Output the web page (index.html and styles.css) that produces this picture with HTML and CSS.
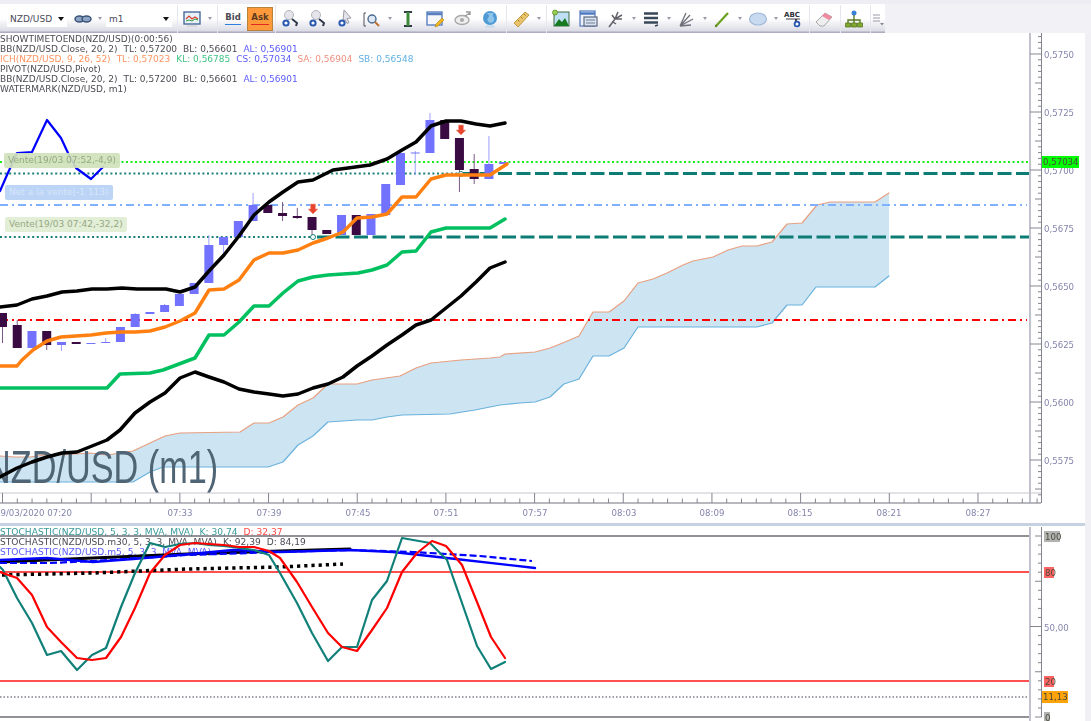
FILE: index.html
```html
<!DOCTYPE html>
<html lang="en">
<head>
    <meta charset="UTF-8">
    <title>NZD/USD m1</title>
    <link rel="stylesheet" href="styles.css">
</head>
<body>
<svg class="defs" width="0" height="0">
    <symbol id="i-glass" viewBox="0 0 20 20">
        <circle cx="9" cy="6" r="4.5" fill="#e4e4ea" stroke="#b4b4c0"/>
        <path d="M12 10l5 4-1 3" fill="none" stroke="#30384a" stroke-width="2"/>
        <circle cx="6" cy="14" r="2.6" fill="#fff" stroke="#2858b0" stroke-width="2"/>
    </symbol>
</svg>
<div class="page">
    <div class="top-strip"></div>
    <div class="toolbar-row">
        <div class="toolbar">
            <div class="tb-select first"><span>NZD/USD</span><i class="caret"></i></div>
            <div class="tb-btn chain"><svg viewBox="0 0 20 20"><ellipse cx="6.5" cy="10" rx="4.5" ry="3" fill="#8ea4c4" stroke="#3c5478" stroke-width="1.5"/><ellipse cx="13.5" cy="10" rx="4.5" ry="3" fill="#8ea4c4" stroke="#3c5478" stroke-width="1.5"/></svg></div>
            <i class="tb-arrow"></i>
            <div class="tb-select second"><span>m1</span><i class="caret"></i></div>
            <i class="tb-sep after-select"></i>
            <div class="tb-btn"><svg viewBox="0 0 20 20"><rect x="2" y="3" width="16" height="12" fill="#e8f0fa" stroke="#4a6a9c" stroke-width="1.4"/><path d="M4 10l3-3 3 3 3-2 3 2" fill="none" stroke="#d84030" stroke-width="1.2"/><path d="M4 12l3-1 3 1 3-2 3 1" fill="none" stroke="#30a040"/><path d="M5 17h10" stroke="#c4c4cc"/></svg></div>
            <i class="tb-arrow"></i>
            <i class="tb-sep wide"></i>
            <div class="tb-side bid"><span>Bid</span></div>
            <div class="tb-side ask"><span>Ask</span></div>
            <i class="tb-sep"></i>
            <div class="tb-btn"><svg viewBox="0 0 20 20"><use href="#i-glass"/></svg></div>
            <div class="tb-btn"><svg viewBox="0 0 20 20"><use href="#i-glass"/></svg></div>
            <div class="tb-btn"><svg viewBox="0 0 20 20"><path d="M9 1l7 8-4 .5 2 4-2 1-2-4-2 2z" fill="#e4e4ea" stroke="#9c9ca8"/><circle cx="7" cy="14" r="2.6" fill="#fff" stroke="#2858b0" stroke-width="2"/></svg></div>
            <div class="tb-btn"><svg viewBox="0 0 20 20"><path d="M4 4H2v13h2" fill="none" stroke="#50505c"/><circle cx="10" cy="10" r="4" fill="#dce8f4" stroke="#4a6a8c" stroke-width="1.4"/><path d="M13 13l4 4" stroke="#c07030" stroke-width="2"/></svg></div>
            <i class="tb-arrow"></i>
            <div class="tb-btn"><svg viewBox="0 0 20 20"><path d="M6 3h8M6 17h8" stroke="#303840" stroke-width="2"/><path d="M10 3v14" stroke="#3a8a3a" stroke-width="3"/></svg></div>
            <div class="tb-btn"><svg viewBox="0 0 20 20"><rect x="2" y="3" width="15" height="13" fill="#f4f6fa" stroke="#5a80c0" stroke-width="1.4"/><path d="M2 5h15" stroke="#5a80c0" stroke-width="2.5"/><path d="M11 15l6-6 2 2-6 6-3 1z" fill="#f0b820" stroke="#b08010" stroke-width=".6"/></svg></div>
            <div class="tb-btn"><svg viewBox="0 0 20 20"><ellipse cx="9" cy="11" rx="7" ry="4.5" fill="#eee" stroke="#a8a8a8" stroke-width="1.4"/><circle cx="9" cy="11" r="2" fill="#aaa"/><path d="M12 7l5-3M13 3h4v3" fill="none" stroke="#999" stroke-width="1.4"/></svg></div>
            <div class="tb-btn"><svg viewBox="0 0 20 20"><circle cx="10" cy="9" r="7" fill="#4e9ad4"/><path d="M6 4c3 1 4 3 2 5s1 5 3 5 4-3 3-5-2-3 0-5" fill="#8cc4ea"/><ellipse cx="10" cy="17.5" rx="5" ry="1.2" fill="#c8dcec"/></svg></div>
            <i class="tb-sep"></i>
            <div class="tb-btn"><svg viewBox="0 0 20 20"><path d="M3 14L14 3l4 3L7 18z" fill="#eac46a" stroke="#c09a40"/><path d="M7 11l1.500 1.500M10 8l1.500 1.500M13 5l1.500 1.500" stroke="#a07a28"/></svg></div>
            <i class="tb-arrow"></i>
            <i class="tb-sep wide"></i>
            <div class="tb-btn"><svg viewBox="0 0 20 20"><rect x="3" y="3" width="15" height="14" fill="#bfe0f4" stroke="#3c6a40"/><path d="M3 17l5-7 3 3 3-4 4 8z" fill="#187a20"/><circle cx="4" cy="3.500" r="2.500" fill="#98d050" stroke="#508020" stroke-width=".7"/></svg></div>
            <div class="tb-btn"><svg viewBox="0 0 20 20"><rect x="2" y="2" width="15" height="15" fill="#eef2fa" stroke="#5a80c0" stroke-width="1.3"/><path d="M2 4.500h15" stroke="#4a78c0" stroke-width="2.400"/><rect x="6" y="8" width="13" height="9" fill="#d8e2f0" stroke="#606c80" stroke-width="1.200"/><path d="M8 11h9M8 14h9" stroke="#707c90"/></svg></div>
            <div class="tb-btn"><svg viewBox="0 0 20 20"><path d="M3 18l6-8M9 10l-3-4M9 10l3-7M9 10l7-4M7 13l3 2M10 10l6 0" fill="none" stroke="#606068" stroke-width="1.500"/></svg></div>
            <i class="tb-arrow"></i>
            <div class="tb-btn"><svg viewBox="0 0 20 20"><path d="M3 4.500h14M3 9h14M3 13.500h14" stroke="#384858" stroke-width="2.400"/><path d="M14 17l3-1" stroke="#384858" stroke-width="1.500"/></svg></div>
            <i class="tb-arrow"></i>
            <div class="tb-btn"><svg viewBox="0 0 20 20"><path d="M3 17L9 4M3 17L13 6M3 17L16 10M3 17l11-1" fill="none" stroke="#70707a" stroke-width="1.300"/></svg></div>
            <i class="tb-arrow"></i>
            <div class="tb-btn"><svg viewBox="0 0 20 20"><path d="M4 17L16 4" stroke="#6aa020" stroke-width="2.200"/><circle cx="4" cy="17" r="1.200" fill="#608a20"/></svg></div>
            <i class="tb-arrow"></i>
            <div class="tb-btn"><svg viewBox="0 0 20 20"><ellipse cx="10" cy="10" rx="8.500" ry="6" fill="#c8daf0" stroke="#a0b8d8" stroke-width="1.200"/></svg></div>
            <i class="tb-arrow"></i>
            <div class="tb-btn"><svg viewBox="0 0 20 20"><text class="abc" x="1" y="8">ABC</text><path d="M3 10h14" stroke="#404048"/><path d="M13 10v3" stroke="#404048" stroke-width="2"/><circle cx="14" cy="15" r="2.400" fill="#fff" stroke="#2858b0" stroke-width="1.800"/></svg></div>
            <i class="tb-sep"></i>
            <div class="tb-btn"><svg viewBox="0 0 20 20"><path d="M2 13l9-9 7 4-8 9H6z" fill="#eee" stroke="#a8a8a8"/><path d="M11 4l7 4-3 3-7-4z" fill="#f08aa0"/></svg></div>
            <i class="tb-sep"></i>
            <div class="tb-btn"><svg viewBox="0 0 20 20"><circle cx="10" cy="4" r="2.500" fill="#3a80d8"/><path d="M10 6v4M4 14v-3h12v3M10 10v4" fill="none" stroke="#587a20" stroke-width="1.400"/><path d="M1.500 14h5v4h-5zM7.500 14h5v4h-5zM13.500 14h5v4h-5z" fill="#80a830" stroke="#587a20" stroke-width=".8"/></svg></div>
            <i class="tb-sep"></i>
            <div class="tb-more"><svg viewBox="0 0 12 14"><path d="M1 2h7M1 5h7M1 8h7" stroke="#9a9aa6"/><path d="M8 10h4l-2 2.500z" fill="#888894"/></svg></div>
        </div>
    </div>
    <div class="workspace">
        <div class="charts">
            <section class="pane price-pane">
                <svg id="price-chart" class="chart" viewBox="0 33 1085 490" width="1085" height="490"></svg>
                <div class="legend">
                    <div>SHOWTIMETOEND(NZD/USD)(0:00:56)</div>
                    <div>BB(NZD/USD.Close, 20, 2)<span class="gap">TL: 0,57200</span><span class="gap">BL: 0,56601</span><span class="gap c-blue">AL: 0,56901</span></div>
                    <div class="c-orange">ICH(NZD/USD, 9, 26, 52)<span class="gap">TL: 0,57023</span><span class="gap c-green">KL: 0,56785</span><span class="gap c-blue">CS: 0,57034</span><span class="gap c-salmon">SA: 0,56904</span><span class="gap c-sky">SB: 0,56548</span></div>
                    <div>PIVOT(NZD/USD,Pivot)</div>
                    <div>BB(NZD/USD.Close, 20, 2)<span class="gap">TL: 0,57200</span><span class="gap">BL: 0,56601</span><span class="gap c-blue">AL: 0,56901</span></div>
                    <div>WATERMARK(NZD/USD, m1)</div>
                </div>
                <div class="order-tag sell sell-top">Vente(19/03 07:52,-4,9)</div>
                <div class="order-tag net">Net a la vente(-1 113)</div>
                <div class="order-tag sell sell-low">Vente(19/03 07:42,-32,2)</div>
            </section>
            <div class="pane-divider"></div>
            <section class="pane stoch-pane">
                <svg id="stoch-chart" class="chart" viewBox="0 526 1085 195" width="1085" height="195"></svg>
                <div class="legend stoch-legend">
                    <div class="c-teal">STOCHASTIC(NZD/USD, 5, 3, 3, MVA, MVA)<span class="gap">K: 30,74</span><span class="gap c-red">D: 32,37</span></div>
                    <div>STOCHASTIC(NZD/USD.m30, 5, 3, 3, MVA, MVA)<span class="gap">K: 92,39</span><span class="gap">D: 84,19</span></div>
                    <div class="c-blue">STOCHASTIC(NZD/USD.m5, 5, 3, 3, MVA, MVA)</div>
                </div>
            </section>
        </div>
        <div class="gutter"></div>
    </div>
</div>
<script src="chart.js"></script>
</body>
</html>
```

FILE: styles.css
```css
html, body {
    margin: 0;
    padding: 0;
    background: #fff;
    overflow: hidden;
}
.defs {
    position: absolute;
}
.page {
    width: 1091px;
    height: 721px;
    display: flex;
    flex-direction: column;
    font-family: "DejaVu Sans", sans-serif;
    filter: blur(0.45px);
}
.top-strip {
    height: 4px;
    background: #eeedf4;
}
.toolbar-row {
    height: 29px;
    background: #f1f1f6;
    display: flex;
}
.toolbar {
    width: 878px;
    padding-left: 7px;
    display: flex;
    align-items: center;
    background: linear-gradient(#fff 0, #fff 50%, #dcdce6 92%, #aeaec2 97%);
}
.tb-btn {
    width: 27.5px;
    height: 22px;
    display: flex;
    align-items: center;
    justify-content: center;
    flex: none;
}
.tb-btn svg {
    width: 20px;
    height: 20px;
}
.tb-btn.chain {
    width: 26px;
    margin-left: 3px;
}
.tb-arrow {
    width: 8px;
    height: 3px;
    flex: none;
    position: relative;
}
.tb-arrow::after {
    content: "";
    position: absolute;
    left: 2px;
    top: 0;
    border: 2.5px solid transparent;
    border-top: 3px solid #9a9aa8;
    border-bottom: 0;
}
.tb-sep {
    width: 3px;
    height: 28px;
    flex: none;
    box-sizing: border-box;
    border-right: 1px solid #e6e6ee;
}
.tb-sep.wide {
    width: 4.5px;
}
.tb-sep.after-select {
    margin-left: 3px;
}
.tb-select {
    height: 17px;
    background: #fff;
    display: flex;
    align-items: center;
    justify-content: space-between;
    box-sizing: border-box;
    padding: 0 2px 0 3px;
    font-size: 9px;
    color: #4a4a5a;
    flex: none;
}
.tb-select.first {
    width: 60px;
}
.tb-select.second {
    width: 66px;
    margin-left: 2px;
}
.caret {
    width: 0;
    height: 0;
    border: 3.5px solid transparent;
    border-top: 4px solid #111;
    border-bottom: 0;
    margin-right: 1px;
}
.tb-side {
    width: 26px;
    height: 24px;
    box-sizing: border-box;
    flex: none;
    display: flex;
    align-items: center;
    justify-content: center;
    font-size: 8.5px;
    font-weight: bold;
}
.tb-side span {
    padding-bottom: 2px;
    border-bottom: 1px solid;
}
.bid {
    margin-left: 2px;
    color: #4a4a55;
}
.bid span {
    border-color: #2a80e0;
}
.ask {
    margin-left: 1px;
    color: #5a3a20;
    background: #ff9a3c;
    border: 1px solid #b8843c;
}
.ask span {
    border-color: #e02a20;
}
.tb-more {
    width: 12px;
    height: 14px;
    flex: none;
    margin-left: 1px;
}
.abc {
    font-size: 7px;
    font-weight: bold;
    fill: #303038;
}
.workspace {
    flex: 1;
    display: flex;
    min-height: 0;
}
.charts {
    width: 1085px;
    display: flex;
    flex-direction: column;
}
.gutter {
    flex: 1;
    background: #f0f0f5;
}
.pane {
    position: relative;
}
.price-pane {
    height: 490px;
}
.stoch-pane {
    height: 195px;
}
.chart {
    display: block;
    position: relative;
    z-index: 1;
}
.pane-divider {
    height: 3px;
    background: #c6d2e2;
}
.legend {
    position: absolute;
    left: 0;
    top: 1px;
    font-size: 9px;
    line-height: 10px;
    color: #4c4c54;
    white-space: nowrap;
}
.stoch-legend {
    top: 1px;
    font-size: 9.1px;
}
.gap {
    margin-left: 6px;
}
.c-blue { color: #5c5cff; }
.c-orange { color: #ff9460; }
.c-green { color: #40c484; }
.c-salmon { color: #f09080; }
.c-sky { color: #60b0e0; }
.c-teal { color: #3a9a9a; }
.c-red { color: #ff4a4a; }
.order-tag {
    position: absolute;
    z-index: 2;
    height: 15px;
    line-height: 15px;
    padding: 0 4px 0 4px;
    font-size: 9px;
    white-space: nowrap;
    border-radius: 2px;
}
.sell {
    color: #96a884;
}
.sell-top {
    left: 4px;
    top: 120px;
    background: rgba(208, 226, 188, 0.92);
}
.sell-low {
    left: 5px;
    top: 184px;
    background: #e2eed6;
}
.net {
    left: 5px;
    top: 152px;
    color: #d6e6fa;
    background: #bcd4f6;
}

/* chart drawing */
.ax-line { stroke: #c2c2ce; stroke-width: 2; }
.ruler { stroke: #858590; stroke-width: 1; fill: none; }
.time-line { stroke: #c6c6ce; stroke-width: 1; }
.time-base { stroke: #a0a0aa; stroke-width: 1.5; }
.ax-text { font-size: 8.6px; fill: #8484ae; }
.ax-badge-text { font-size: 8.6px; fill: #4a4a3a; }
.badge-gray { fill: #b2b2b2; }
.badge-red { fill: #ff6464; }
.badge-orange { fill: #ffa30a; }
.badge-lime { fill: #00ff00; }
.cloud { fill: #cde4f2; stroke: none; }
.cloud-top { fill: none; stroke: #e8a080; stroke-width: 1.2; }
.cloud-bot { fill: none; stroke: #6ab2dc; stroke-width: 1.2; }
.watermark { font-family: "Liberation Sans", sans-serif; font-size: 46px; fill: #4f6474; }
.hl-lime { stroke: #14f014; stroke-width: 2.2; stroke-dasharray: 2 2.5; }
.hl-teal-dot { stroke: #1a8078; stroke-width: 2.2; stroke-dasharray: 2 2.6; }
.hl-teal-dash { stroke: #0c7c74; stroke-width: 3; stroke-dasharray: 14 4.500; }
.hl-sky { stroke: #80b0ff; stroke-width: 1.8; stroke-dasharray: 8 4 2 4; }
.hl-red { stroke: #ff0000; stroke-width: 2.2; stroke-dasharray: 8 4 2 4; }
.up { fill: #7272ff; }
.up-wick { stroke: #a0a0ff; stroke-width: 1; }
.down { fill: #3a0a42; }
.down-wick { stroke: #7a5a84; stroke-width: 1; }
.mark-ring { fill: #fff; stroke: #1a8078; stroke-width: 1; }
.mark-arrow { fill: #e8452e; stroke: #f0a090; stroke-width: 0.6; }
.ln { fill: none; stroke-linejoin: round; stroke-linecap: round; }
.ln-black { stroke: #000; stroke-width: 3.500; }
.ln-orange { stroke: #ff8010; stroke-width: 3.500; }
.ln-green { stroke: #00c060; stroke-width: 3.500; }
.ln-blue { stroke: #0000ff; stroke-width: 2.200; }
.hl-pane { stroke: #6c6c74; stroke-width: 1.500; }
.hl-level { stroke: #ff5050; stroke-width: 2; }
.hl-dots { stroke: #80808a; stroke-width: 1.500; stroke-dasharray: 1.500 2; }
.st-teal { stroke: #108078; stroke-width: 2.200; }
.st-red { stroke: #ff0000; stroke-width: 2.200; }
.st-black { stroke: #000; stroke-width: 3; }
.st-blue { stroke: #0000ff; stroke-width: 2.400; }
.st-blue-dash { stroke: #0000ff; stroke-width: 2.200; stroke-dasharray: 7 3; stroke-linecap: butt; }
.st-black-dot { stroke: #000; stroke-width: 3.500; stroke-dasharray: 3.200 4; stroke-linecap: butt; }
```

FILE: chart.js
```js
// Draws both panes. All coordinates are page pixels, the viewBox of each svg lines up with the page.
const NS = 'http://www.w3.org/2000/svg';

function add(svg, tag, cls, attrs, text) {
    const el = document.createElementNS(NS, tag);
    if (cls) el.setAttribute('class', cls);
    for (const k in attrs) el.setAttribute(k, attrs[k]);
    if (text) el.textContent = text;
    svg.appendChild(el);
    return el;
}

function hline(svg, cls, y, x1, x2) {
    add(svg, 'line', cls, { x1: x1, y1: y, x2: x2, y2: y });
}

function vline(svg, cls, x, y1, y2) {
    add(svg, 'line', cls, { x1: x, y1: y1, x2: x, y2: y2 });
}

function poly(svg, cls, pts) {
    add(svg, 'polyline', 'ln ' + cls, { points: pts.join(' ') });
}

function axisText(svg, cls, x, y, text, anchor) {
    add(svg, 'text', cls, { x: x, y: y, 'text-anchor': anchor || 'start' }, text);
}

function badge(svg, cls, x, y, w, h, text) {
    add(svg, 'rect', cls, { x: x, y: y - h / 2, width: w, height: h });
    axisText(svg, 'ax-badge-text', x + 1, y + 3, text);
}

/* ---------- price pane ---------- */
const price = document.getElementById('price-chart');

const cloudTop = [[0,456],[15,457],[30,457],[45,455],[60,455],[90,453],[107,455],[133,451],[150,443],[165,436],[180,433],[240,432],[254,423],[269,423],[283,417],[298,405],[313,398],[328,384],[357,384],[372,380],[400,376],[416,368],[431,363],[461,360],[490,358],[500,357],[505,354],[535,352],[550,348],[565,342],[579,336],[593,312],[609,312],[624,301],[638,283],[653,279],[667,273],[683,265],[693,261],[713,257],[728,250],[742,246],[757,246],[772,242],[787,224],[802,223],[817,205],[830,202],[875,202],[889,193]];
const cloudBot = [[0,482],[133,482],[150,472],[163,467],[268,467],[283,462],[298,445],[313,436],[328,422],[357,420],[372,420],[387,417],[402,415],[450,414],[475,410],[500,405],[520,403],[535,402],[550,397],[564,384],[579,379],[593,356],[609,356],[624,348],[638,327],[757,327],[772,323],[787,305],[802,305],[816,287],[875,287],[889,276]];

add(price, 'polygon', 'cloud', { points: cloudTop.concat(cloudBot.slice().reverse()).join(' ') });
poly(price, 'cloud-top', cloudTop);
poly(price, 'cloud-bot', cloudBot);

add(price, 'text', 'watermark', { transform: 'translate(-14 483) scale(0.745 1)' }, 'NZD/USD (m1)');

hline(price, 'hl-red', 320, 0, 1027);
hline(price, 'hl-sky', 205, 0, 1027);
hline(price, 'hl-lime', 162, 0, 1029);
hline(price, 'hl-teal-dot', 173.5, 0, 461);
hline(price, 'hl-teal-dash', 173.5, 461, 1029);
hline(price, 'hl-teal-dot', 237, 0, 313);
hline(price, 'hl-teal-dash', 237, 317, 1029);

// [dir, bodyTop, bodyBottom, wickTop, wickBottom], one every 14.8px from x = 2.5
const candles = [
    ['d',313,327,313,343],['d',325,348,320,348],['u',331,348,331,348],['d',331,345,331,350],
    ['u',342,345,342,351],['d',342,344,342,344],['u',343,344,343,344],['u',342,343,338,343],
    ['u',327,342,327,342],['u',314,327,313,327],['u',312,314,312,314],['u',305,312,304,312],
    ['u',294,306,294,306],['u',283,294,283,294],['u',245,283,235,283],['u',237,245,237,258],
    ['u',221,237,221,237],['u',205,221,193,221],['d',205,213,205,213],['d',213,216,202,221],
    ['d',216,218,208,219],['d',217,230,217,238],['d',230,234,230,234],['u',215,235,215,235],
    ['d',215,235,215,235],['u',214,235,214,235],['u',184,215,184,215],['u',153,185,153,185],
    ['u',152.500,153.500,151,175],['u',120,153,113,153],['d',120,139,120,139],['d',138,170,138,192],
    ['d',169,179,154,184],['u',164,179,136,179],['u',162,164,162,164]
];
candles.forEach(function (c, i) {
    const x = 2.5 + i * 14.74;
    vline(price, c[0] === 'u' ? 'up-wick' : 'down-wick', x, c[3], c[4]);
    add(price, 'rect', c[0] === 'u' ? 'up' : 'down', { x: x - 4.5, y: c[1], width: 9, height: c[2] - c[1] });
});

// short entry markers
[[313, 204], [461, 125]].forEach(function (m) {
    const x = m[0], y = m[1];
    add(price, 'path', 'mark-arrow', { d: `M${x - 2.500} ${y}h5v5h2.500l-5 5-5-5h2.500z` });
});
add(price, 'circle', 'mark-ring', { cx: 313, cy: 237, r: 2.500 });
add(price, 'circle', 'mark-ring', { cx: 461, cy: 174, r: 2.500 });

poly(price, 'ln-blue', [[0,191],[7,175],[17,153],[32,152],[47,120],[61,138],[68,153],[76,168],[91,179],[103,167]]);
poly(price, 'ln-black', [[0,477],[17,468],[32,462],[47,457],[62,453],[77,452],[92,446],[107,440],[120,430],[135,413],[150,402],[165,393],[180,378],[195,372],[209,377],[224,382],[239,389],[254,392],[269,394],[283,396],[298,394],[313,388],[328,384],[343,377],[357,366],[372,356],[387,345],[402,335],[416,325],[431,320],[446,308],[461,296],[476,282],[490,268],[505,262]]);
poly(price, 'ln-green', [[0,388],[107,388],[120,374],[150,373],[163,370],[195,358],[209,335],[224,335],[239,322],[254,306],[269,306],[283,293],[298,281],[313,277],[328,275],[343,274],[358,273],[372,270],[387,265],[402,252],[416,251],[431,232],[446,228],[490,228],[505,219]]);
poly(price, 'ln-orange', [[0,366],[17,366],[22,360],[33,350],[47,341],[61,337],[76,336],[91,335],[106,333],[121,332],[135,332],[150,331],[165,327],[180,321],[195,313],[209,290],[224,289],[239,280],[254,260],[269,253],[283,253],[298,250],[313,243],[328,238],[343,232],[357,218],[372,217],[387,214],[402,197],[416,197],[431,179],[446,175],[490,175],[507,164]]);
poly(price, 'ln-black', [[0,307],[17,305],[32,299],[47,296],[62,292],[77,291],[92,289],[107,289],[122,288],[137,289],[166,289],[180,292],[195,287],[209,271],[224,255],[239,236],[254,215],[269,202],[283,192],[298,182],[313,180],[333,170],[348,168],[370,165],[387,159],[402,150],[416,142],[431,126],[446,121],[461,121],[476,124],[490,126],[505,123]]);

// price scale
vline(price, 'ax-line', 1030, 33, 503);
vline(price, 'ruler', 1041.5, 33, 503);
for (let k = -3; k < 78; k++) {
    const y = 54 + k * 5.8;
    if (y > 500) break;
    const x1 = k % 10 === 0 ? 1030 : (k % 5 === 0 ? 1035 : 1038);
    hline(price, 'ruler', y, x1, 1041.5);
}
[['0,5750',54],['0,5725',112],['0,5700',170],['0,5675',228],['0,5650',286],['0,5625',344],['0,5600',402],['0,5575',460]].forEach(function (t) {
    axisText(price, 'ax-text', 1044, t[1] + 3.500, t[0]);
});
badge(price, 'badge-lime', 1042, 162, 37, 12, '0,57034');

// time scale
hline(price, 'time-line', 493, 0, 1041);
hline(price, 'time-base', 503, 0, 1041);
for (let i = 0; i < 71; i++) {
    const x = 2.5 + i * 14.78;
    vline(price, 'ruler', x, i % 6 === 0 ? 493 : 498.500, 503);
}
axisText(price, 'ax-text', -5, 516, '19/03/2020 07:20');
[['07:33',180],['07:39',269],['07:45',358],['07:51',446],['07:57',535],['08:03',624],['08:09',712],['08:15',800],['08:21',889],['08:27',978]].forEach(function (t) {
    axisText(price, 'ax-text', t[1], 516, t[0], 'middle');
});

/* ---------- stochastic pane ---------- */
const stoch = document.getElementById('stoch-chart');

hline(stoch, 'hl-pane', 536, 0, 1030);
hline(stoch, 'hl-pane', 717, 0, 1030);
hline(stoch, 'hl-level', 572, 0, 1030);
hline(stoch, 'hl-level', 681, 0, 1030);
hline(stoch, 'hl-dots', 697, 0, 1030);

poly(stoch, 'st-black', [[0,562],[93,558],[187,554],[280,551],[350,549]]);
poly(stoch, 'st-black-dot', [[2,575],[93,573],[187,569],[280,567],[343,564]]);
poly(stoch, 'st-blue', [[0,560],[47,558],[93,562],[133,559],[180,555],[233,550],[280,552],[350,550],[393,552],[447,558],[535,568]]);
poly(stoch, 'st-blue-dash', [[0,563],[50,563],[93,561],[187,555],[280,552],[350,550],[413,552],[480,556],[532,561]]);
poly(stoch, 'st-teal', [[0,567],[3,570],[17,598],[32,623],[47,655],[61,651],[77,670],[92,655],[106,648],[121,607],[135,573],[150,543],[165,547],[180,544],[195,543],[209,545],[224,546],[239,548],[254,550],[269,555],[280,573],[297,603],[312,633],[328,661],[342,647],[357,647],[372,600],[387,581],[402,538],[430,543],[447,560],[462,603],[477,646],[491,669],[505,662]]);
poly(stoch, 'st-red', [[0,572],[17,578],[32,595],[47,627],[61,642],[77,658],[92,660],[106,658],[121,637],[135,608],[150,573],[165,555],[180,545],[195,543],[209,544],[224,545],[239,547],[254,547],[269,551],[280,558],[297,582],[312,607],[328,633],[342,647],[357,651],[372,630],[387,608],[402,572],[417,553],[432,541],[446,546],[462,565],[477,602],[491,637],[505,658]]);

vline(stoch, 'ax-line', 1030, 527, 721);
vline(stoch, 'ruler', 1041.5, 527, 717);
for (let k = 0; k <= 20; k++) {
    const y = 536 + k * 9.05;
    const x1 = k === 10 ? 1030 : (k % 5 === 0 ? 1035 : 1038);
    hline(stoch, 'ruler', y, x1, 1041.5);
}
badge(stoch, 'badge-gray', 1044, 536.500, 16, 11, '100');
badge(stoch, 'badge-red', 1044, 572.500, 10, 11, '80');
axisText(stoch, 'ax-text', 1044, 630.500, '50,00');
badge(stoch, 'badge-red', 1044, 681.500, 10, 11, '20');
badge(stoch, 'badge-orange', 1042, 697, 26, 12, '11,13');
badge(stoch, 'badge-gray', 1044, 717.500, 6, 11, '0');
```
